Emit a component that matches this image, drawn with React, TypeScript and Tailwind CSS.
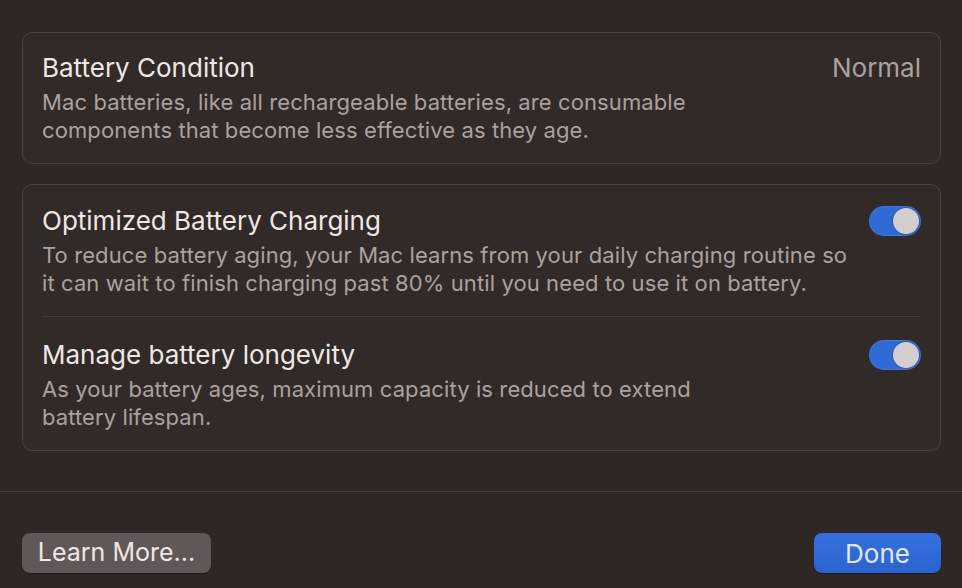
const font = { fontFamily: "Inter, 'Noto Sans', sans-serif" };

function Toggle() {
  return (
    <div className="flex h-[30px] w-[52px] shrink-0 items-center justify-end rounded-full bg-[#2f6bd6] p-[2px] shadow-[inset_0_0_0_1px_rgba(255,255,255,0.08)]">
      <div className="h-[26px] w-[26px] rounded-full bg-[#d3cfcc] shadow-[0_0_2px_rgba(0,0,0,0.4)]" />
    </div>
  );
}

type RowProps = {
  title: string;
  lines: string[];
  right: React.ReactNode;
};

function Row({ title, lines, right }: RowProps) {
  return (
    <div className="flex items-start justify-between gap-2">
      <div className="whitespace-nowrap">
        <div className="mb-[4px] text-[26px] leading-[32px] text-[#ede8e4]">{title}</div>
        {lines.map((line) => (
          <div key={line} className="text-[22px] leading-[28px] tracking-[0.1px] text-[#aaa29d]">
            {line}
          </div>
        ))}
      </div>
      <div className="flex h-[32px] shrink-0 items-center">{right}</div>
    </div>
  );
}

export default function App() {
  return (
    <div className="flex h-[588px] w-[962px] flex-col bg-[#2e2723]" style={font}>
      <div className="flex flex-col gap-[20px] pl-[22px] pr-[21px] pt-[32px]">
        <div className="rounded-[10px] border border-[#4a423d] bg-[#322a26] px-[19px] pb-[19px] pt-[19px]">
          <Row
            title="Battery Condition"
            lines={[
              "Mac batteries, like all rechargeable batteries, are consumable",
              "components that become less effective as they age.",
            ]}
            right={<span className="text-[26px] leading-[32px] text-[#aaa29d]">Normal</span>}
          />
        </div>

        <div className="rounded-[10px] border border-[#4a423d] bg-[#322a26] px-[19px] pb-[19px] pt-[20px]">
          <Row
            title="Optimized Battery Charging"
            lines={[
              "To reduce battery aging, your Mac learns from your daily charging routine so",
              "it can wait to finish charging past 80% until you need to use it on battery.",
            ]}
            right={<Toggle />}
          />
          <div className="mb-[22px] mt-[19px] h-px bg-[#443c37]" />
          <Row
            title="Manage battery longevity"
            lines={[
              "As your battery ages, maximum capacity is reduced to extend",
              "battery lifespan.",
            ]}
            right={<Toggle />}
          />
        </div>
      </div>

      <div className="mt-[40px] h-px bg-[#463e39]" />

      <div className="flex items-center justify-between pl-[22px] pr-[21px] pt-[41px]">
        <button className="h-[40px] w-[189px] rounded-[8px] bg-[#5f5856] text-[25px] text-[#ede8e4] shadow-[0_1px_1px_rgba(0,0,0,0.3)]">
          Learn More...
        </button>
        <button className="h-[40px] w-[127px] rounded-[8px] bg-gradient-to-b from-[#3471e0] to-[#2b63cf] text-[26px] text-[#e2e8f6] shadow-[0_1px_1px_rgba(0,0,0,0.3)]">
          Done
        </button>
      </div>
    </div>
  );
}
